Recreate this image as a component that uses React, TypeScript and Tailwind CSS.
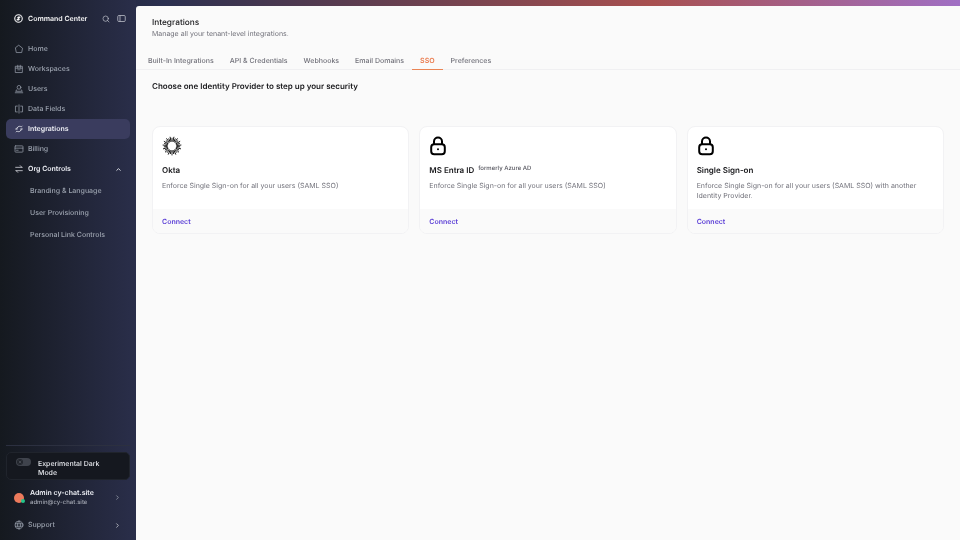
import React from "react";
import { Search, ChevronUp, ChevronRight, X } from "lucide-react";

const font = { fontFamily: "Inter, sans-serif" };

function Okta() {
  const rays = Array.from({ length: 30 }, (_, i) => i * 12);
  return (
    <svg width="20" height="20" viewBox="0 0 20 20" className="block">
      {rays.map((a, i) => (
        <line key={a} x1="10" y1={i % 2 ? 0.6 : 1.8} x2="10" y2="5.6" stroke="#000" strokeWidth="0.85" transform={`rotate(${a} 10 10)`} />
      ))}
    </svg>
  );
}

function LockIcon() {
  return (
    <svg width="18" height="20" viewBox="0 0 18 20" fill="none" stroke="#000" className="block">
      <rect x="2.2" y="8.2" width="13.6" height="10" rx="3" strokeWidth="2" />
      <path d="M5 8V5.600a4 4 0 0 1 8 0V8" strokeWidth="2" />
      <circle cx="9" cy="13.200" r="1" fill="#000" stroke="none" />
    </svg>
  );
}

const S = (p: { children: React.ReactNode }) => (
  <svg width="10" height="10" viewBox="0 0 24 24" fill="none" stroke="currentColor" strokeWidth="1.7" strokeLinejoin="round" strokeLinecap="round">{p.children}</svg>
);

const items = [
  { label: "Home", icon: <S><path d="M12 3.500 20.500 10l-2 10.500h-13L3.500 10z" /></S> },
  { label: "Workspaces", icon: <S><path d="M4 5.500h16v15H4z" /><path d="M4 10h16M9 3v7M15 3v7M9 14h6" /></S> },
  { label: "Users", icon: <S><circle cx="12" cy="8" r="4.500" /><path d="M7 13.500c-1.500 1-2.500 2.500-3 4h16c-.5-1.500-1.500-3-3-4M3 21h18" /></S> },
  { label: "Data Fields", icon: <S><path d="M8 5H3.500v14H8M16 5h4.500v14H16M12 2v20" /></S> },
  { label: "Integrations", active: true, icon: <S><path d="M8 8.500a6 6 0 0 1 9.500-1.500l2-2M16.500 15.500a6 6 0 0 1-9.500 1.500l-2 2M6 12l2-3.500M18 12l-2 3.500M4 12h4M16 12h4" /></S> },
  { label: "Billing", icon: <S><rect x="2.500" y="4.500" width="19" height="15" rx="1.500" /><path d="M2.500 10h19M6 15h4" /></S> },
];

const tabs = ["Built-In Integrations", "API & Credentials", "Webhooks", "Email Domains", "SSO", "Preferences"];

function Card({ icon, title, extra, desc }: { icon: React.ReactNode; title: string; extra?: string; desc: string }) {
  return (
    <div className="flex-1 h-[108px] flex flex-col rounded-[8px] border border-[#f2f2f4] bg-white overflow-hidden">
      <div className="flex-1 px-[9px] pt-[8px]">
        <div className="h-[22px] flex items-center">{icon}</div>
        <div className="flex items-start mt-[6px] h-[14px]">
          <span className="text-[8px] leading-[14px] font-semibold text-[#18181b]">{title}</span>
          {extra && <span className="ml-[4px] mt-[1px] text-[6px] leading-[10px] font-medium text-[#52525b]">{extra}</span>}
        </div>
        <p className="mt-[4px] text-[7px] leading-[10px] text-[#71717a]">{desc}</p>
      </div>
      <div className="h-[24px] bg-[#fafafa] pl-[9px] pt-[2px] flex items-center text-[7px] font-semibold text-[#5b3fd6]">Connect</div>
    </div>
  );
}

export default function App() {
  return (
    <div style={font} className="w-[960px] h-[540px] overflow-hidden flex [text-rendering:geometricPrecision] [will-change:transform] bg-[linear-gradient(90deg,#15191f_0%,#2b3050_17%,#a85050_68%,#a06fc4_100%)]">
      <aside className="w-[136px] h-full flex flex-col shrink-0 bg-[linear-gradient(90deg,#15191f_0%,#2a2e4a_100%)] text-[#9ca3af]">
        <div className="h-[37px] flex items-center pl-[14px] pr-[10px] text-[#f4f4f5]">
          <svg width="9" height="9" viewBox="0 0 24 24" fill="none" stroke="currentColor" strokeWidth="3"><circle cx="12" cy="12" r="10" /><path d="M7 17 17 7M9 10l5-3M10 17l5-3" /></svg>
          <span className="ml-[5px] mt-[1px] text-[7px] font-semibold flex-1">Command Center</span>
          <Search size={8} className="text-[#c4c7d0]" />
          <svg width="9" height="9" viewBox="0 0 24 24" fill="none" stroke="#c4c7d0" strokeWidth="2" className="ml-[7px]"><rect x="2" y="4" width="20" height="16" rx="3" /><path d="M8 4v16" /></svg>
        </div>
        <nav className="mt-[2px] px-[6px] flex flex-col">
          {items.map(({ label, icon, active }) => (
            <div key={label} className={`h-[20px] flex items-center pl-[8px] rounded-[5px] ${active ? "bg-[#3a3c5e] text-[#eceef4]" : ""}`}>
              {icon}
              <span className={`ml-[4px] text-[7px] ${active ? "font-semibold" : "font-medium"}`}>{label}</span>
            </div>
          ))}
          <div className="h-[20px] flex items-center pl-[8px] pr-[8px] text-[#eceef4]">
            <S><path d="M4 8h15M15 4l4 4M20 16H5M9 20l-4-4" /></S>
            <span className="ml-[4px] text-[7px] font-semibold flex-1">Org Controls</span>
            <ChevronUp size={7} strokeWidth={3} />
          </div>
          <div className="h-[1px]" />
          {["Branding & Language", "User Provisioning", "Personal Link Controls"].map((t) => (
            <div key={t} className="h-[22px] flex items-center pl-[24px] text-[7px] font-medium">{t}</div>
          ))}
        </nav>
        <div className="mt-auto">
          <div className="mx-[6px] border-t border-[#2c3040] h-[7px]" />
          <div className="mx-[6px] mb-[2px] h-[28px] rounded-[5px] bg-[#15181f] border border-[#20242c] relative">
            <div className="absolute left-[9px] top-[5px] w-[15px] h-[8px] rounded-full bg-[#3f434c] flex items-center pl-[1px]">
              <div className="w-[6px] h-[6px] rounded-full bg-[#23262d] flex items-center justify-center"><X size={4} className="text-[#8a8e97]" /></div>
            </div>
            <div className="ml-[31px] mr-[20px] mt-[7px] text-[7px] leading-[8.5px] font-medium text-[#e4e6eb]">Experimental Dark Mode</div>
          </div>
          <div className="h-[32px] pb-[1px] flex items-center pl-[14px] pr-[15px]">
            <div className="relative w-[10px] h-[10px] rounded-full bg-[#ec7a5c]">
              <div className="absolute right-[-1px] bottom-[0px] w-[4px] h-[4px] rounded-full bg-[#22c58b]" />
            </div>
            <div className="ml-[6px] flex-1">
              <div className="text-[7px] leading-[10px] font-semibold text-[#eceef4]">Admin cy-chat.site</div>
              <div className="text-[6px] leading-[9px] font-medium text-[#a1a5b0]">admin@cy-chat.site</div>
            </div>
            <ChevronRight size={7} strokeWidth={2.5} />
          </div>
          <div className="h-[22px] mb-[4px] flex items-center pl-[14px] pr-[15px]">
            <S><circle cx="12" cy="12" r="9.500" /><path d="M3 9h18M3 15h18M12 2.500c-5 5-5 14 0 19M12 2.500c5 5 5 14 0 19" /></S>
            <span className="ml-[4px] text-[7px] font-medium flex-1">Support</span>
            <ChevronRight size={7} strokeWidth={2.5} className="text-[#d4d6dc]" />
          </div>
        </div>
      </aside>
      <main className="flex-1 mt-[6px] bg-[#fafafa] rounded-tl-[3px] flex flex-col">
        <div className="pl-[16px] pt-[10px]">
          <h1 className="text-[8.3px] leading-[12px] font-medium text-[#18181b] mt-[1px]">Integrations</h1>
          <p className="mt-[-1px] text-[7px] leading-[11px] text-[#71717a]">Manage all your tenant-level integrations.</p>
        </div>
        <div className="mt-[16px] pl-[12px] h-[15px] flex items-start border-b border-[#f0f0f2] text-[7px] font-medium text-[#71717a] gap-[16px]">
          {tabs.map((t) => (
            <div key={t} className={t === "SSO" ? "relative text-[#ea7a4c] font-semibold px-[8px] -mx-[8px] pt-[1px] h-[15px] border-b-[1.5px] border-[#ea8555] leading-[10px]" : "pt-[1px] leading-[10px]"}>{t}</div>
          ))}
        </div>
        <div className="pl-[16px] mt-[10px] text-[8px] leading-[12px] font-semibold text-[#18181b]">Choose one Identity Provider to step up your security</div>
        <div className="mt-[34px] mx-[16px] flex gap-[10px]">
          <Card icon={<Okta />} title="Okta" desc="Enforce Single Sign-on for all your users (SAML SSO)" />
          <Card icon={<LockIcon />} title="MS Entra ID" extra="formerly Azure AD" desc="Enforce Single Sign-on for all your users (SAML SSO)" />
          <Card icon={<LockIcon />} title="Single Sign-on" desc="Enforce Single Sign-on for all your users (SAML SSO) with another Identity Provider." />
        </div>
      </main>
    </div>
  );
}
